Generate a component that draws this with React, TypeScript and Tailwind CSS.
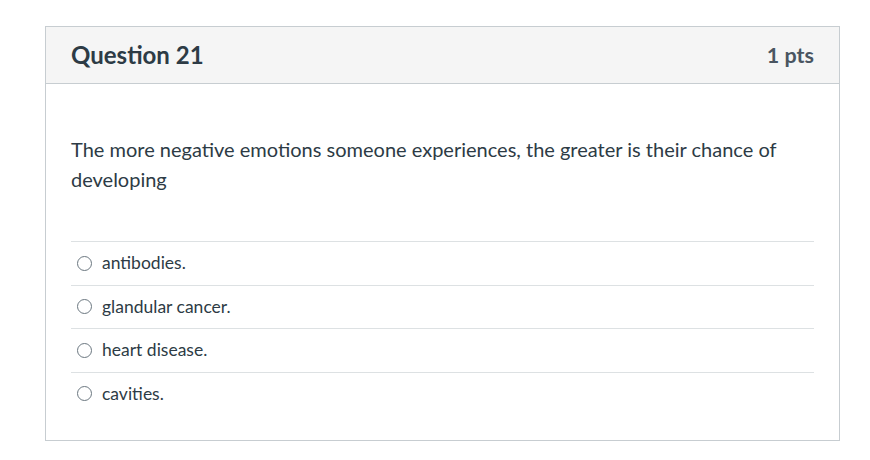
import React from "react";

const answers = ["antibodies.", "glandular cancer.", "heart disease.", "cavities."];

export default function App() {
	return (
		<div className="min-h-[460px] w-[870px] bg-white pt-[26px] pl-[45px] font-['Lato',sans-serif] text-[#2d3b45]">
			<div className="w-[795px] border border-[#c7cdd1]">
				{/* Header */}
				<div className="flex h-[57px] items-center justify-between border-b border-[#c7cdd1] bg-[#f5f5f5] px-[25px]">
					<h2 className="text-[24px] font-bold">Question 21</h2>
					<span className="text-[21.5px] font-bold text-[#4a5561]">1 pts</span>
				</div>

				{/* Body */}
				<div className="px-[25px] pt-[50px] pb-[25px]">
					<p className="text-[20px] leading-[30px]">
						The more negative emotions someone experiences, the greater is their chance of developing
					</p>
					<div className="mt-[47px]">
						{answers.map((a) => (
							<label
								key={a}
								className="flex h-[43.5px] items-center gap-[10px] border-t border-[#dde1e3] pl-[6px] text-[17.5px]"
							>
								<span className="h-[15px] w-[15px] rounded-full border border-[#6b7780] bg-white" />
								{a}
							</label>
						))}
					</div>
				</div>
			</div>
		</div>
	);
}
